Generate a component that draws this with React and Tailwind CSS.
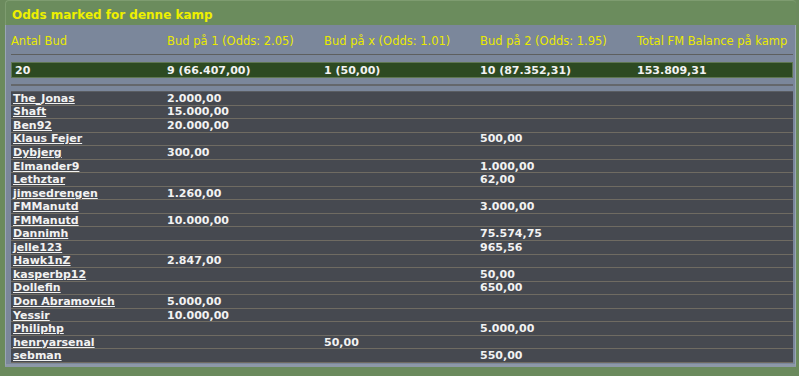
const columns = [
  'Antal Bud',
  'Bud på 1 (Odds: 2.05)',
  'Bud på x (Odds: 1.01)',
  'Bud på 2 (Odds: 1.95)',
  'Total FM Balance på kamp'
]

const summary = ['20', '9 (66.407,00)', '1 (50,00)', '10 (87.352,31)', '153.809,31']

const bets = [
  ['The_Jonas', '2.000,00', '', ''],
  ['Shaft', '15.000,00', '', ''],
  ['Ben92', '20.000,00', '', ''],
  ['Klaus Fejer', '', '', '500,00'],
  ['Dybjerg', '300,00', '', ''],
  ['Elmander9', '', '', '1.000,00'],
  ['Lethztar', '', '', '62,00'],
  ['jimsedrengen', '1.260,00', '', ''],
  ['FMManutd', '', '', '3.000,00'],
  ['FMManutd', '10.000,00', '', ''],
  ['Dannimh', '', '', '75.574,75'],
  ['jelle123', '', '', '965,56'],
  ['Hawk1nZ', '2.847,00', '', ''],
  ['kasperbp12', '', '', '50,00'],
  ['Dollefin', '', '', '650,00'],
  ['Don Abramovich', '5.000,00', '', ''],
  ['Yessir', '10.000,00', '', ''],
  ['Philiphp', '', '', '5.000,00'],
  ['henryarsenal', '', '50,00', ''],
  ['sebman', '', '', '550,00']
]

export default function App() {
  return (
    <div
      className="w-[799px] h-[376px] bg-[#6b8a5d] pl-[5px] pr-[3px] text-[11px]"
      style={{ fontFamily: 'Tahoma, "DejaVu Sans", sans-serif' }}
    >
      {/* title bar */}
      <div className="h-[25px] flex items-center pl-[6px] pt-[3px] rounded-t-[4px] bg-[#6b8c5d] border-t border-l border-[#7e9c70]">
        <span className="text-[12px] font-bold text-[#eef000]">Odds marked for denne kamp</span>
      </div>

      {/* panel */}
      <div className="bg-[#7b879b] border-l border-r border-b-[3px] border-l-[#9aa6b6] border-r-[#9aa6b6] border-b-[#8d98a8] pl-[5px] pr-[2px] pb-[1px]">
        {/* header */}
        <div className="grid grid-cols-[156px_157px_156px_157px_1fr] h-[30px] pt-[9px] border-b border-[#5d5f5f]">
          {columns.map((c) => (
            <div key={c} className="text-[11.5px] leading-[14px] text-[#eaea00] whitespace-nowrap">{c}</div>
          ))}
        </div>

        {/* summary */}
        <div className="mt-[7px] grid grid-cols-[152px_157px_156px_157px_1fr] h-[16px] items-center bg-[#2d4a22] border border-[#5f7752] pl-[3px]">
          {summary.map((s, i) => (
            <div key={i} className="font-bold text-[#f2f2f2] whitespace-nowrap">{s}</div>
          ))}
        </div>

        <div className="mt-[6px] border-b-[2px] border-[#64676b]" />

        {/* bets */}
        <div className="mt-[5px] bg-[#464950] border-t border-[#5a5d62]">
          {bets.map((b, i) => (
            <div
              key={i}
              className="grid grid-cols-[154px_157px_156px_157px_1fr] h-[13.55px] items-center border-b border-[#6f6b62] pl-[2px] leading-none"
            >
              <div className="font-bold text-[#f2f2f2] underline underline-offset-[1px] whitespace-nowrap">{b[0]}</div>
              <div className="font-bold text-[#f2f2f2]">{b[1]}</div>
              <div className="font-bold text-[#f2f2f2]">{b[2]}</div>
              <div className="font-bold text-[#f2f2f2]">{b[3]}</div>
              <div />
            </div>
          ))}
        </div>
      </div>
    </div>
  )
}
